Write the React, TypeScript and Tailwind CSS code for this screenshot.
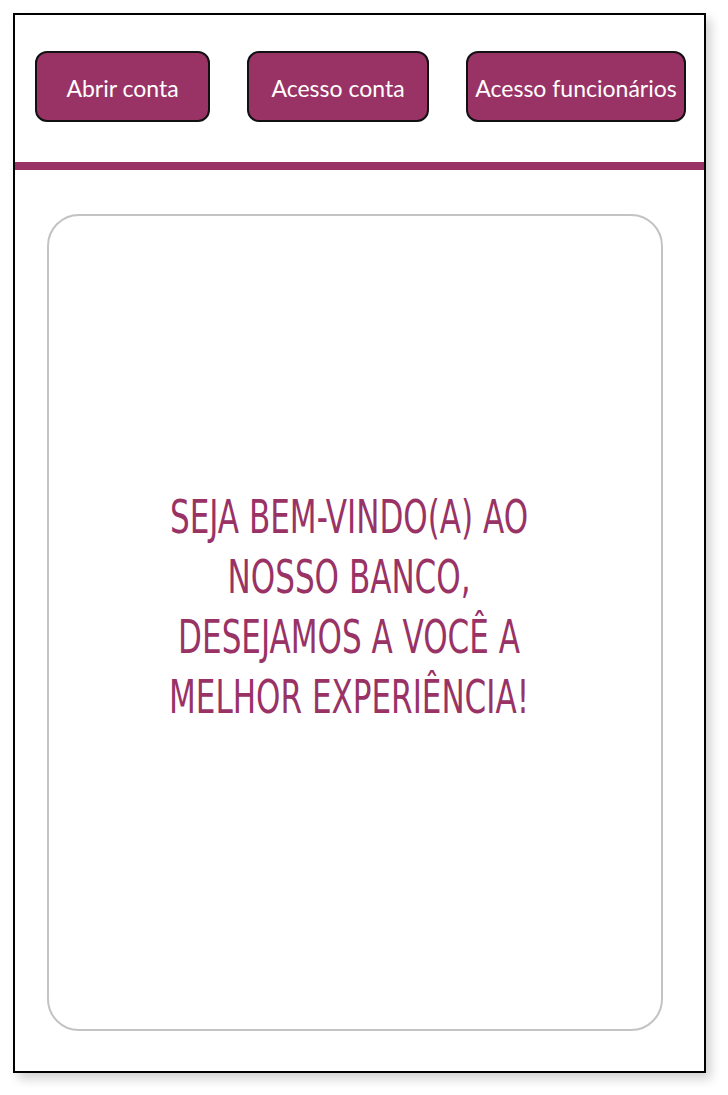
import React from "react";

const buttons = [
  { label: "Abrir conta", width: "w-[175px]" },
  { label: "Acesso conta", width: "w-[182px]" },
  { label: "Acesso funcionários", width: "w-[220px]" },
];

export default function App() {
  return (
    <div className="min-h-[1095px] w-full bg-white pt-[13px] pl-[13px]">
      <div className="w-[693px] h-[1060px] border-2 border-black bg-white shadow-[5px_6px_10px_rgba(0,0,0,0.18)] flex flex-col">
        {/* top buttons */}
        <div className="flex items-center gap-[37px] pl-[20px] pt-[36px]">
          {buttons.map((b) => (
            <button
              key={b.label}
              type="button"
              className={`${b.width} h-[71px] rounded-[12px] border-2 border-[#111] bg-[#993366] text-white text-[23px] pt-[3px] font-['Lato','Open_Sans',sans-serif] flex items-center justify-center whitespace-nowrap`}
            >
              {b.label}
            </button>
          ))}
        </div>

        <div className="mt-[40px] h-[8px] w-full bg-[#993366]" />

        {/* welcome card */}
        <div className="mt-[44px] ml-[32px] w-[616px] h-[817px] rounded-[32px] border-2 border-[#c3c3c3] flex items-center justify-center pr-[12px] pb-[32px]">
          <h1 className="text-center uppercase text-[#993366] text-[46px] leading-[60px] scale-x-[0.75] whitespace-nowrap font-['DejaVu_Sans_Condensed','DejaVu_Sans',sans-serif]">
            Seja bem-vindo(a) ao
            <br />
            nosso banco,
            <br />
            desejamos a você a
            <br />
            melhor experiência!
          </h1>
        </div>
      </div>
    </div>
  );
}
